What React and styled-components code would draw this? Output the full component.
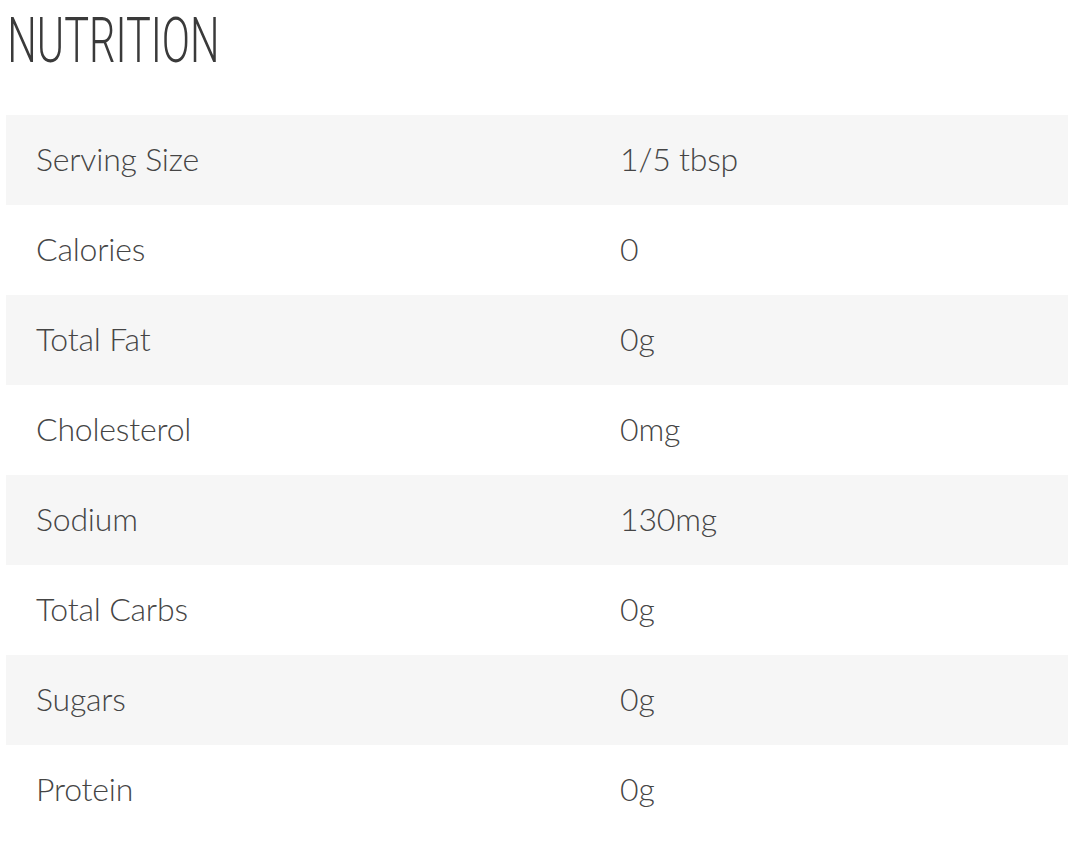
import React from "react";
import styled, { createGlobalStyle } from "styled-components";

const Global = createGlobalStyle`
  html, body { margin: 0; padding: 0; background: #fff; }
  body { font-family: Lato, "Open Sans", sans-serif; color: #444; }
`;

const Page = styled.div`
  padding: 0 2px 0 6px;
`;

const Title = styled.h2`
  margin: 0;
  padding: 9px 0 0 2px;
  height: 115px;
  box-sizing: border-box;
  font-family: Roboto, sans-serif;
  font-weight: 300;
  font-size: 63px;
  line-height: 63px;
  color: #3a3a3a;
  transform: scaleX(0.66);
  transform-origin: left top;
`;

const Table = styled.div`
  display: flex;
  flex-direction: column;
`;

const Row = styled.div`
  display: grid;
  grid-template-columns: 55% 45%;
  height: 90px;
  align-items: center;
  background: ${(p) => (p.$shaded ? "#f6f6f6" : "#fff")};
`;

const Cell = styled.div`
  padding: 0 0 4px 30px;
  font-size: 32px;
  font-weight: 300;
  letter-spacing: -0.2px;
  color: #454545;
`;

const rows = [
  ["Serving Size", "1/5 tbsp"],
  ["Calories", "0"],
  ["Total Fat", "0g"],
  ["Cholesterol", "0mg"],
  ["Sodium", "130mg"],
  ["Total Carbs", "0g"],
  ["Sugars", "0g"],
  ["Protein", "0g"],
];

export default function App() {
  return (
    <>
      <Global />
      <Page>
        <Title>NUTRITION</Title>
        <Table>
          {rows.map(([k, v], i) => (
            <Row key={k} $shaded={i % 2 === 0}>
              <Cell>{k}</Cell>
              <Cell>{v}</Cell>
            </Row>
          ))}
        </Table>
      </Page>
    </>
  );
}
